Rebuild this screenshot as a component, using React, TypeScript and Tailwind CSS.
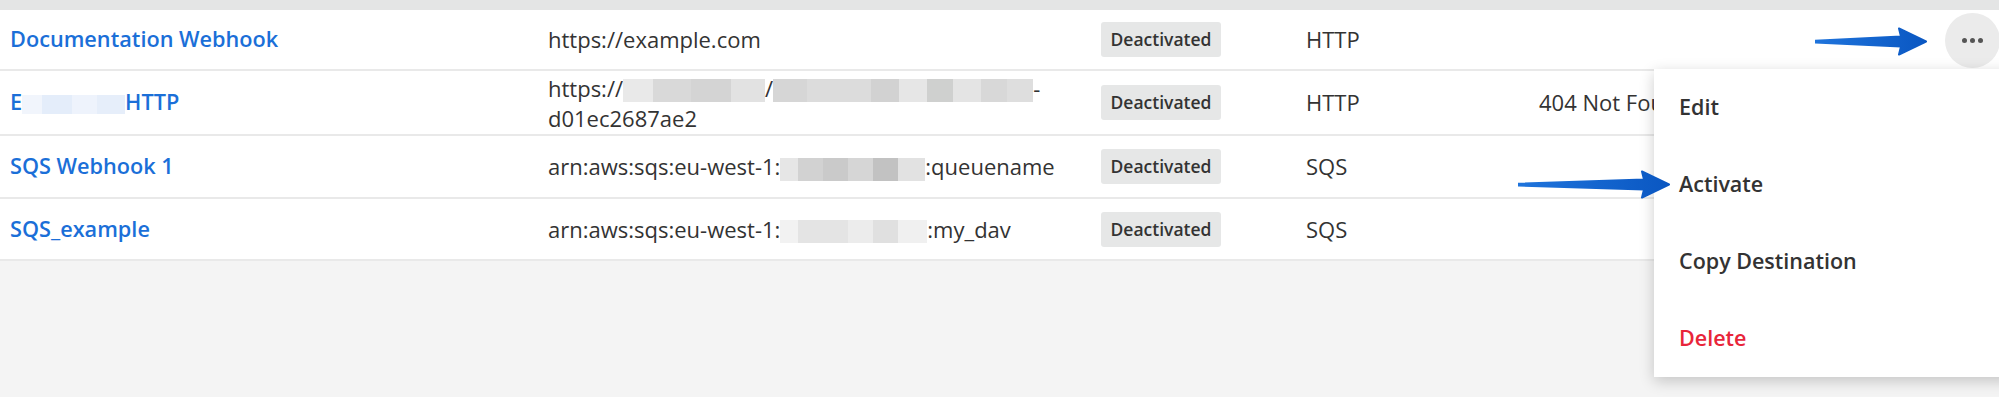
import type { ReactNode } from 'react'

const font = { fontFamily: '"Open Sans", "Noto Sans", sans-serif' }

type Cell = { w: number; c: string }

function Mosaic({ cells, h = 'h-[23px]' }: { cells: Cell[]; h?: string }) {
  return (
    <span className={`inline-flex align-middle ${h}`}>
      {cells.map((cell, i) => (
        <span key={i} className="h-full" style={{ width: cell.w, backgroundColor: cell.c }} />
      ))}
    </span>
  )
}

const nameBlur: Cell[] = [
  { w: 20, c: '#f1f5fc' },
  { w: 30, c: '#e4edfa' },
  { w: 25, c: '#eef3fc' },
  { w: 28, c: '#e6eefa' },
]

const hostBlur: Cell[] = [
  { w: 30, c: '#e9e9e9' },
  { w: 38, c: '#d9d9d9' },
  { w: 40, c: '#d4d4d4' },
  { w: 34, c: '#e2e2e2' },
]

const pathBlur: Cell[] = [
  { w: 34, c: '#d6d6d6' },
  { w: 64, c: '#dcdcdc' },
  { w: 28, c: '#d2d2d2' },
  { w: 28, c: '#e6e6e6' },
  { w: 26, c: '#cfd0cf' },
  { w: 28, c: '#e4e4e4' },
  { w: 26, c: '#d8d8d8' },
  { w: 26, c: '#dedede' },
]

const queueBlur: Cell[] = [
  { w: 18, c: '#e6e6e6' },
  { w: 25, c: '#d2d2d2' },
  { w: 25, c: '#cacaca' },
  { w: 25, c: '#d6d6d6' },
  { w: 25, c: '#c2c2c2' },
  { w: 27, c: '#e2e2e2' },
]

const davBlur: Cell[] = [
  { w: 18, c: '#f2f2f2' },
  { w: 50, c: '#e4e4e4' },
  { w: 25, c: '#ececec' },
  { w: 25, c: '#e0e0e0' },
  { w: 29, c: '#f0f0f0' },
]

type Row = {
  height: string
  name: ReactNode
  url: ReactNode
  type: string
  status?: string
}

const rows: Row[] = [
  {
    height: 'h-[61px]',
    name: 'Documentation Webhook',
    url: 'https://example.com',
    type: 'HTTP',
  },
  {
    height: 'h-[65px]',
    name: (
      <>
        E<Mosaic cells={nameBlur} h="h-[19px]" />
        HTTP
      </>
    ),
    url: (
      <div className="leading-[30px]">
        <div className="whitespace-nowrap">
          https://
          <Mosaic cells={hostBlur} />
          /
          <Mosaic cells={pathBlur} />-
        </div>
        <div>d01ec2687ae2</div>
      </div>
    ),
    type: 'HTTP',
    status: '404 Not Found',
  },
  {
    height: 'h-[63px]',
    name: 'SQS Webhook 1',
    url: (
      <span className="whitespace-nowrap">
        arn:aws:sqs:eu-west-1:
        <Mosaic cells={queueBlur} />
        :queuename
      </span>
    ),
    type: 'SQS',
  },
  {
    height: 'h-[62px]',
    name: 'SQS_example',
    url: (
      <span className="whitespace-nowrap">
        arn:aws:sqs:eu-west-1:
        <Mosaic cells={davBlur} />
        :my_dav
      </span>
    ),
    type: 'SQS',
  },
]

function Arrow({ width, id }: { width: number; id: string }) {
  const h = 29
  const mid = h / 2
  const hb = width - 28
  return (
    <svg width={width} height={h} viewBox={`0 0 ${width} ${h}`}>
      <defs>
        <linearGradient id={id} x1="0" y1="0" x2="1" y2="0">
          <stop offset="0" stopColor="#1f74dc" />
          <stop offset="1" stopColor="#0a57c2" />
        </linearGradient>
      </defs>
      <polygon
        points={`0,${mid - 0.8} ${hb + 2},${mid - 5} ${hb},1.5 ${width - 1},${mid} ${hb},${h - 1.5} ${hb + 2},${mid + 5} 0,${mid + 1}`}
        fill={`url(#${id})`}
        stroke={`url(#${id})`}
        strokeWidth="2"
        strokeLinejoin="round"
      />
    </svg>
  )
}

export default function App() {
  return (
    <div className="relative h-[397px] w-full overflow-hidden bg-[#f4f4f4] text-[#333]" style={font}>
      <div className="h-[10px] bg-[#e4e5e5]" />
      <div className="bg-white">
        {rows.map((row, i) => (
          <div
            key={i}
            className={`grid grid-cols-[538px_553px_205px_233px_1fr] items-center border-b-2 border-[#e9e9e9] pl-[10px] ${row.height}`}
          >
            <div className="text-[21.7px] font-semibold text-[#1b6fd8]">{row.name}</div>
            <div className="text-[22px]">{row.url}</div>
            <div>
              <span className="inline-flex h-[35px] w-[120px] items-center justify-center rounded-[3px] bg-[#e6e7e7] text-[17.5px] font-semibold">
                Deactivated
              </span>
            </div>
            <div className="text-[22px]">{row.type}</div>
            <div className="whitespace-nowrap text-[22px]">{row.status}</div>
          </div>
        ))}
      </div>

      <div className="absolute left-[1815px] top-[27px]">
        <Arrow width={112} id="arrow-a" />
      </div>

      <button
        type="button"
        className="absolute left-[1945px] top-[13px] flex h-[55px] w-[55px] items-center justify-center gap-[3px] rounded-full bg-[#ebebeb]"
      >
        <span className="h-[5px] w-[5px] rounded-full bg-[#555]" />
        <span className="h-[5px] w-[5px] rounded-full bg-[#555]" />
        <span className="h-[5px] w-[5px] rounded-full bg-[#555]" />
      </button>

      <div className="absolute left-[1654px] top-[69px] w-[360px] bg-white shadow-[0_4px_14px_rgba(0,0,0,0.2)]">
        {['Edit', 'Activate', 'Copy Destination'].map((label) => (
          <div key={label} className="flex h-[77px] items-center pl-[25px] text-[21.5px] font-semibold text-[#333]">
            {label}
          </div>
        ))}
        <div className="flex h-[77px] items-center pl-[25px] text-[21.5px] font-semibold text-[#e8253a]">Delete</div>
      </div>

      <div className="absolute left-[1518px] top-[170px]">
        <Arrow width={152} id="arrow-b" />
      </div>
    </div>
  )
}
